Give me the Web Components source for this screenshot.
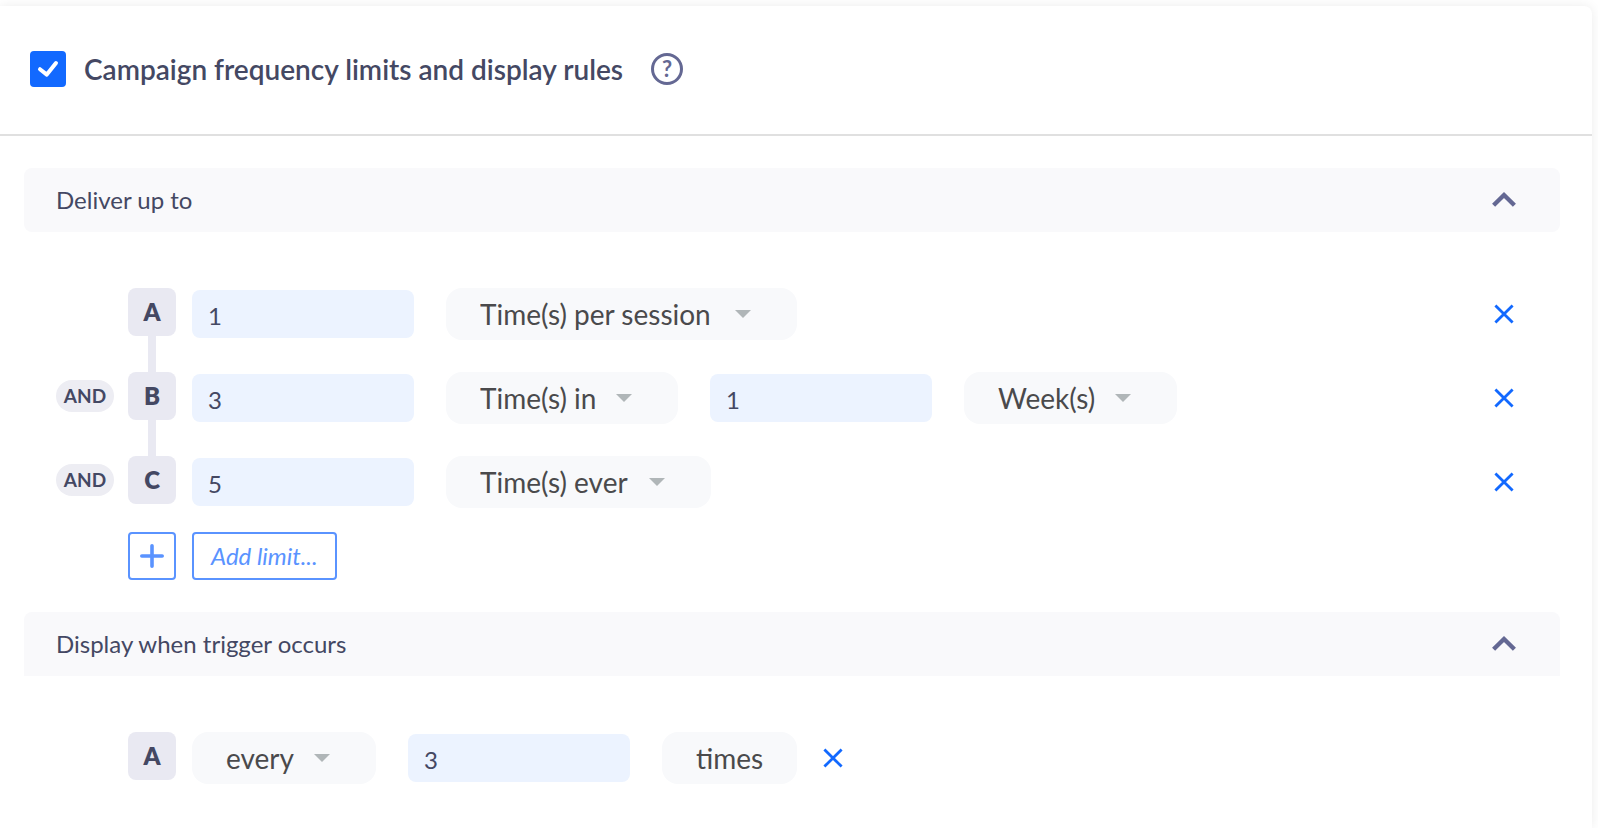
<!DOCTYPE html>
<html lang="en">
<head>
  <meta charset="UTF-8">
  <meta name="viewport" content="width=device-width, initial-scale=1.0">
  <title>Campaign frequency limits</title>
  <style>
    :root {
      --text: #444863;
      --icon: #646893;
      --blue: #1269ff;
      --blue-light: #5a93ff;
      --badge: #e9e9f2;
      --bar: #f9f9fb;
      --field: #ecf3ff;
      --pill: #f8f9fb;
    }

    body {
      margin: 0;
      background-color: #fff;
      color: var(--text);
      font-family: "Lato", "Open Sans", sans-serif;
      font-size: 24px;
    }
  </style>
</head>
<body>

  <settings-card>
    <settings-toggle slot="header" checked>Campaign frequency limits and display rules</settings-toggle>

    <rule-section heading="Deliver up to">
      <rule-row letter="A" linked>
        <number-field value="1" label="Times per session"></number-field>
        <option-picker options="Time(s) per session" label="Limit A type" style="--width: 351px"></option-picker>
      </rule-row>
      <rule-row letter="B" operator="AND" linked>
        <number-field value="3" label="Number of times"></number-field>
        <option-picker options="Time(s) in" label="Limit B type" style="--width: 232px"></option-picker>
        <number-field value="1" label="Number of weeks"></number-field>
        <option-picker options="Week(s)" label="Limit B period" style="--width: 213px"></option-picker>
      </rule-row>
      <rule-row letter="C" operator="AND">
        <number-field value="5" label="Times ever"></number-field>
        <option-picker options="Time(s) ever" label="Limit C type" style="--width: 265px"></option-picker>
      </rule-row>
      <add-limit>Add limit...</add-limit>
    </rule-section>

    <rule-section heading="Display when trigger occurs" attached>
      <rule-row letter="A" compact>
        <option-picker options="every" label="Trigger frequency" style="--width: 184px"></option-picker>
        <number-field value="3" label="Trigger count"></number-field>
        <text-pill>times</text-pill>
      </rule-row>
    </rule-section>
  </settings-card>

  <script>
    class SettingsCard extends HTMLElement {

      constructor () {
        super()
        this.shadow = this.attachShadow({ mode: 'open' })
      }

      connectedCallback () {
        this.render()
      }

      render () {
        this.shadow.innerHTML =
        /*html*/`
        <style>
          :host {
            display: block;
            box-sizing: border-box;
            min-height: calc(100vh - 6px);
            margin: 6px 6px 0 0;
            background-color: #fff;
            border-radius: 0 8px 0 0;
            box-shadow: 0 0 12px rgba(0, 0, 0, 0.08);
          }

          header {
            padding: 45px 30px 47px;
            border-bottom: 2px solid #e0e0e0;
          }

          main {
            display: flex;
            flex-direction: column;
            gap: 32px;
            padding: 32px 32px 32px 24px;
          }
        </style>

        <header><slot name="header"></slot></header>
        <main><slot></slot></main>
        `
      }
    }

    class SettingsToggle extends HTMLElement {

      constructor () {
        super()
        this.shadow = this.attachShadow({ mode: 'open' })
      }

      connectedCallback () {
        this.render()
      }

      render () {
        const checked = this.hasAttribute('checked') ? 'checked' : ''

        this.shadow.innerHTML =
        /*html*/`
        <style>
          :host {
            display: flex;
            align-items: center;
            gap: 28px;
          }

          label {
            display: flex;
            align-items: center;
            gap: 18px;
            font-size: 28px;
            font-weight: 600;
            line-height: 36px;
          }

          .box {
            display: grid;
            width: 36px;
            height: 36px;
          }

          .box > * {
            grid-area: 1 / 1;
          }

          input {
            appearance: none;
            width: 36px;
            height: 36px;
            margin: 0;
            border: 2px solid var(--icon);
            border-radius: 4px;
          }

          input:checked {
            background-color: var(--blue);
            border-color: var(--blue);
          }

          .box svg {
            visibility: hidden;
            pointer-events: none;
          }

          input:checked + svg {
            visibility: visible;
          }

          button {
            width: 32px;
            height: 32px;
            padding: 0;
            border: 3px solid var(--icon);
            border-radius: 50%;
            background: none;
            color: var(--icon);
            font-family: inherit;
            font-size: 22px;
            font-weight: 700;
            line-height: 26px;
          }
        </style>

        <label>
          <span class="box">
            <input type="checkbox" ${checked}>
            <svg width="36" height="36" viewBox="0 0 36 36" fill="none" stroke="#fff" stroke-width="4" stroke-linecap="round" stroke-linejoin="round">
              <path d="M10 18.2L16.8 23.6L26 12"/>
            </svg>
          </span>
          <span><slot></slot></span>
        </label>
        <button type="button" title="Help">?</button>
        `
      }
    }

    class RuleSection extends HTMLElement {

      constructor () {
        super()
        this.shadow = this.attachShadow({ mode: 'open' })
      }

      connectedCallback () {
        this.render()
      }

      render () {
        this.shadow.innerHTML =
        /*html*/`
        <style>
          :host {
            display: block;
          }

          .bar {
            display: flex;
            align-items: center;
            justify-content: space-between;
            height: 64px;
            padding: 0 44px 0 32px;
            background-color: var(--bar);
            border-radius: 8px;
          }

          :host([attached]) .bar {
            border-radius: 8px 8px 0 0;
          }

          h2 {
            margin: 0;
            padding-bottom: 2px;
            font-size: 24px;
            font-weight: 400;
          }

          button {
            display: flex;
            padding: 0;
            border: none;
            background: none;
          }

          .rules {
            padding: 56px 44px 0 32px;
          }
        </style>

        <div class="bar">
          <h2>${this.getAttribute('heading')}</h2>
          <button type="button" aria-label="Collapse" aria-expanded="true">
            <svg width="24" height="24" viewBox="0 0 24 24" fill="none" stroke="#646893" stroke-width="4.4">
              <path d="M1.6 17.2L12 7L22.4 17.2"/>
            </svg>
          </button>
        </div>
        <div class="rules"><slot></slot></div>
        `
      }
    }

    class RuleRow extends HTMLElement {

      constructor () {
        super()
        this.shadow = this.attachShadow({ mode: 'open' })
      }

      connectedCallback () {
        this.render()
      }

      render () {
        const operator = this.getAttribute('operator')

        this.shadow.innerHTML =
        /*html*/`
        <style>
          :host {
            display: grid;
            grid-template-columns: 58px 48px 1fr;
            column-gap: 14px;
          }

          .operator {
            height: 32px;
            margin-top: 8px;
            border-radius: 16px;
            background-color: #ededf3;
            font-size: 19px;
            font-weight: 700;
            line-height: 32px;
            text-align: center;
          }

          .marker {
            grid-column: 2;
            display: flex;
            flex-direction: column;
            align-items: center;
          }

          .letter {
            width: 48px;
            height: 48px;
            border-radius: 8px;
            background-color: var(--badge);
            font-weight: 800;
            line-height: 48px;
            text-align: center;
          }

          :host([linked]) .marker::after {
            content: "";
            flex: 1;
            width: 8px;
            background-color: var(--badge);
          }

          .controls {
            display: flex;
            align-items: center;
            gap: 32px;
            height: 52px;
            margin-left: 2px;
          }

          :host([linked]) .controls {
            margin-bottom: 32px;
          }

          :host([compact]) .controls {
            gap: 24px;
          }

          .fields {
            display: flex;
            align-items: center;
            gap: 32px;
          }

          button {
            display: flex;
            margin-left: auto;
            padding: 0;
            border: none;
            background: none;
          }

          :host([compact]) button {
            margin-left: 0;
          }
        </style>

        ${operator ? `<span class="operator">${operator}</span>` : ''}
        <div class="marker"><span class="letter">${this.getAttribute('letter')}</span></div>
        <div class="controls">
          <div class="fields"><slot></slot></div>
          <button type="button" aria-label="Remove">
            <svg width="24" height="24" viewBox="0 0 24 24" fill="none" stroke="#1269ff" stroke-width="2.8">
              <path d="M3.4 3.4L20.6 20.6M20.6 3.4L3.4 20.6"/>
            </svg>
          </button>
        </div>
        `
      }
    }

    class NumberField extends HTMLElement {

      constructor () {
        super()
        this.shadow = this.attachShadow({ mode: 'open' })
      }

      connectedCallback () {
        this.render()
      }

      render () {
        this.shadow.innerHTML =
        /*html*/`
        <style>
          :host {
            display: block;
            width: 222px;
          }

          input {
            display: block;
            box-sizing: border-box;
            width: 100%;
            height: 48px;
            padding: 2px 16px 0;
            border: none;
            border-radius: 8px;
            background-color: var(--field);
            color: var(--text);
            font-family: inherit;
            font-size: 24px;
          }
        </style>

        <input type="text" inputmode="numeric" value="${this.getAttribute('value')}" aria-label="${this.getAttribute('label')}">
        `
      }
    }

    class OptionPicker extends HTMLElement {

      constructor () {
        super()
        this.shadow = this.attachShadow({ mode: 'open' })
      }

      connectedCallback () {
        this.render()
      }

      render () {
        const options = this.getAttribute('options').split('|')

        this.shadow.innerHTML =
        /*html*/`
        <style>
          :host {
            display: grid;
            align-items: center;
            width: var(--width);
          }

          select, svg {
            grid-area: 1 / 1;
          }

          select {
            appearance: none;
            width: 100%;
            height: 52px;
            padding: 0 34px;
            border: none;
            border-radius: 16px;
            background-color: var(--pill);
            color: #4a4a4c;
            font-family: inherit;
            font-size: 28px;
          }

          svg {
            justify-self: end;
            margin-right: 46px;
            pointer-events: none;
          }
        </style>

        <select aria-label="${this.getAttribute('label')}">
          ${options.map(option => `<option>${option}</option>`).join('')}
        </select>
        <svg width="16" height="8" viewBox="0 0 16 8" fill="#b0b6b8">
          <path d="M0 0H16L8 8Z"/>
        </svg>
        `
      }
    }

    class TextPill extends HTMLElement {

      constructor () {
        super()
        this.shadow = this.attachShadow({ mode: 'open' })
      }

      connectedCallback () {
        this.render()
      }

      render () {
        this.shadow.innerHTML =
        /*html*/`
        <style>
          :host {
            display: block;
            padding: 0 34px;
            border-radius: 16px;
            background-color: var(--pill);
            color: #4a4a4c;
            font-size: 28px;
            line-height: 52px;
          }
        </style>

        <slot></slot>
        `
      }
    }

    class AddLimit extends HTMLElement {

      constructor () {
        super()
        this.shadow = this.attachShadow({ mode: 'open' })
      }

      connectedCallback () {
        this.render()
      }

      render () {
        this.shadow.innerHTML =
        /*html*/`
        <style>
          :host {
            display: flex;
            gap: 16px;
            margin: 24px 0 0 72px;
          }

          button {
            display: flex;
            align-items: center;
            justify-content: center;
            box-sizing: border-box;
            height: 48px;
            padding: 0 17px 2px;
            border: 2px solid var(--blue-light);
            border-radius: 4px;
            background: none;
            color: var(--blue-light);
            font-family: inherit;
            font-size: 24px;
            font-style: italic;
          }

          .plus {
            width: 48px;
            padding: 0;
          }
        </style>

        <button type="button" class="plus" aria-label="Add">
          <svg width="24" height="24" viewBox="0 0 24 24" fill="none" stroke="#5a93ff" stroke-width="3.6" stroke-linecap="round">
            <path d="M12 1.8V22.2M1.8 12H22.2"/>
          </svg>
        </button>
        <button type="button"><slot></slot></button>
        `
      }
    }

    customElements.define('settings-card', SettingsCard);
    customElements.define('settings-toggle', SettingsToggle);
    customElements.define('rule-section', RuleSection);
    customElements.define('rule-row', RuleRow);
    customElements.define('number-field', NumberField);
    customElements.define('option-picker', OptionPicker);
    customElements.define('text-pill', TextPill);
    customElements.define('add-limit', AddLimit);
  </script>
</body>
</html>
